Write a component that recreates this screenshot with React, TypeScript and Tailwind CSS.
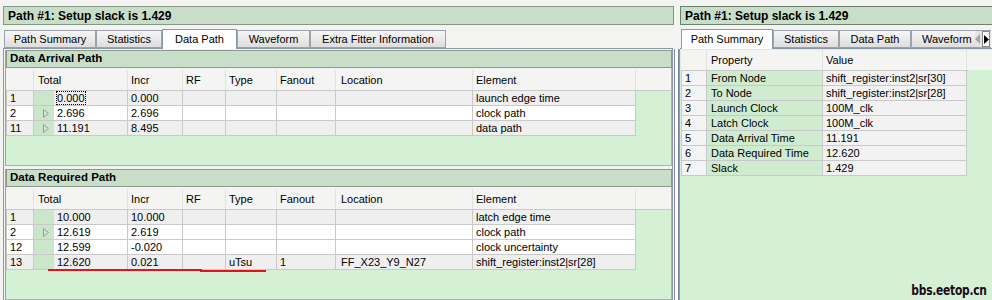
import React from 'react';

type PathRow = {
  n: string;
  arrow?: boolean;
  total: string;
  incr: string;
  type?: string;
  fanout?: string;
  loc?: string;
  el: string;
  shade?: boolean;
  focus?: boolean;
};

const arrival: PathRow[] = [
  { n: '1', total: '0.000', incr: '0.000', el: 'launch edge time', shade: true, focus: true },
  { n: '2', arrow: true, total: '2.696', incr: '2.696', el: 'clock path' },
  { n: '11', arrow: true, total: '11.191', incr: '8.495', el: 'data path', shade: true },
];

const required: PathRow[] = [
  { n: '1', total: '10.000', incr: '10.000', el: 'latch edge time', shade: true },
  { n: '2', arrow: true, total: '12.619', incr: '2.619', el: 'clock path' },
  { n: '12', total: '12.599', incr: '-0.020', el: 'clock uncertainty' },
  { n: '13', total: '12.620', incr: '0.021', type: 'uTsu', fanout: '1', loc: 'FF_X23_Y9_N27', el: 'shift_register:inst2|sr[28]', shade: true },
];

const summary = [
  ['From Node', 'shift_register:inst2|sr[30]'],
  ['To Node', 'shift_register:inst2|sr[28]'],
  ['Launch Clock', '100M_clk'],
  ['Latch Clock', '100M_clk'],
  ['Data Arrival Time', '11.191'],
  ['Data Required Time', '12.620'],
  ['Slack', '1.429'],
];

const COLS = 'grid grid-cols-[28px_20px_74px_55px_43px_51px_59px_137px_163px]';
const CELL = 'border-r border-b border-[#c9c9c9] pl-[3px] leading-[14px] whitespace-nowrap overflow-hidden';

function Arrow() {
  return (
    <svg width="6" height="9" viewBox="0 0 6 9" className="ml-[9px] mt-[3px]">
      <path d="M0.5 0.5 L5.5 4.5 L0.5 8.5 Z" fill="none" stroke="#9a9a9a" strokeWidth="1" />
    </svg>
  );
}

function Tab({ label, w, active }: { label: string; w: string; active?: boolean }) {
  return (
    <div
      className={
        active
          ? `${w} h-[20px] -mb-px border border-b-0 border-[#8d9aa5] bg-white flex items-center justify-center relative z-10`
          : `${w} h-[18px] border border-[#9aa3ab] bg-gradient-to-b from-[#f6f6f6] to-[#dedede] flex items-center justify-center`
      }
    >
      {label}
    </div>
  );
}

function SectionHeader({ title }: { title: string }) {
  return (
    <div className="h-[18px] border border-[#8b9b8b] bg-[#c9dec9] pl-[3px] flex items-center font-bold text-[11.5px]">
      {title}
    </div>
  );
}

function PathTable({ title, rows, grow }: { title: string; rows: PathRow[]; grow?: boolean }) {
  return (
    <div className={`flex flex-col border-l border-[#a0a0a0] ${grow ? 'flex-1' : 'h-[116px]'}`}>
      <SectionHeader title={title} />
      <div className="flex-1 bg-[#d5f1d5] border-r border-b border-[#a8b8a8] flex flex-col">
        <div className="h-[2px] bg-[#f4f4f4]" />
        <div className={`${COLS} h-[20px] bg-[#f4f4f2] w-full`}>
          <div className="border-r border-[#e2e2e2]" />
          <div className="col-span-2 border-r border-[#e2e2e2] pl-[4px] leading-[20px]">Total</div>
          <div className="border-r border-[#e2e2e2] pl-[3px] leading-[20px]">Incr</div>
          <div className="border-r border-[#e2e2e2] pl-[3px] leading-[20px]">RF</div>
          <div className="border-r border-[#e2e2e2] pl-[3px] leading-[20px]">Type</div>
          <div className="border-r border-[#e2e2e2] pl-[3px] leading-[20px]">Fanout</div>
          <div className="border-r border-[#e2e2e2] pl-[5px] leading-[20px]">Location</div>
          <div className="border-r border-[#e2e2e2] pl-[3px] leading-[20px]">Element</div>
        </div>
        <div className="border-t border-[#c9c9c9]">
          {rows.map((r) => (
            <div key={r.n} className={`${COLS} h-[15px] ${r.shade ? 'bg-[#efefef]' : 'bg-white'} w-[630px]`}>
              <div className={`${CELL} border-l pl-[3px]`}>{r.n}</div>
              <div className="border-b border-[#c9c9c9] bg-[#cbe6cb]">{r.arrow && <Arrow />}</div>
              <div className={CELL}>
                {r.focus ? <span className="outline outline-1 outline-dotted outline-black">{r.total}</span> : r.total}
              </div>
              <div className={CELL}>{r.incr}</div>
              <div className={CELL} />
              <div className={CELL}>{r.type}</div>
              <div className={CELL}>{r.fanout}</div>
              <div className={`${CELL} pl-[5px]`}>{r.loc}</div>
              <div className={CELL}>{r.el}</div>
            </div>
          ))}
        </div>
      </div>
    </div>
  );
}

export default function App() {
  return (
    <div className="relative w-[992px] h-[300px] overflow-hidden bg-[#f3f3f1] text-[11px] text-black font-['Liberation_Sans',Arial,sans-serif] flex">
      {/* left panel */}
      <div className="w-[674px] pl-[3px] pt-[6px] flex flex-col">
        <div className="h-[19px] border border-[#879787] bg-[#c8dec8] pl-[4px] flex items-center font-bold text-[12px]">
          Path #1: Setup slack is 1.429
        </div>
        <div className="flex items-end pl-[1px] mt-[2px] h-[21px]">
          <Tab label="Path Summary" w="w-[92px]" />
          <Tab label="Statistics" w="w-[66px]" />
          <Tab label="Data Path" w="w-[75px]" active />
          <Tab label="Waveform" w="w-[73px]" />
          <Tab label="Extra Fitter Information" w="w-[136px]" />
        </div>
        <div className="flex-1 w-[670px] border-t border-l border-r border-[#8d9aa5] pl-[1px] pt-[1px] flex flex-col gap-[3px]">
          <PathTable title="Data Arrival Path" rows={arrival} />
          <PathTable title="Data Required Path" rows={required} grow />
        </div>
      </div>

      {/* right panel */}
      <div className="flex-1 pt-[6px] pl-[6px] flex flex-col">
        <div className="h-[19px] border border-[#6f7f6f] border-r-0 bg-[#c8dec8] pl-[4px] flex items-center font-bold text-[12px]">
          Path #1: Setup slack is 1.429
        </div>
        <div className="flex items-end pl-[1px] mt-[2px] h-[21px]">
          <Tab label="Path Summary" w="w-[92px]" active />
          <Tab label="Statistics" w="w-[66px]" />
          <Tab label="Data Path" w="w-[72px]" />
          <div className="w-[64px] h-[18px] border border-r-0 border-[#9aa3ab] bg-gradient-to-b from-[#f6f6f6] to-[#dedede] pl-[10px] leading-[16px] overflow-hidden whitespace-nowrap">
            Waveform
          </div>
          <div className="h-[18px] flex items-center gap-[1px] bg-[#e4e4e4] border-y border-[#9aa3ab] pr-[1px]">
            <svg width="6" height="10" viewBox="0 0 6 10"><path d="M5 0 L0 5 L5 10 Z" fill="#a8a8a8" /></svg>
            <div className="w-[8px] h-[16px] bg-white border border-[#8a8a8a] flex items-center justify-center">
              <svg width="5" height="9" viewBox="0 0 5 9"><path d="M0 0 L5 4.5 L0 9 Z" fill="#000" /></svg>
            </div>
          </div>
        </div>
        <div className="flex-1 flex border-t border-[#8d9aa5]">
          <div className="w-[5px] border-l border-r border-[#8383a3] bg-white -ml-[6px]" />
          <div className="flex-1 bg-[#d5f1d5] border-l border-[#8d9aa5] pl-[1px] pt-[1px]">
            <div className="grid grid-cols-[26px_116px_144px_1fr] h-[20px] bg-[#f4f4f2]">
              <div className="border-r border-[#e2e2e2]" />
              <div className="border-r border-[#e2e2e2] pl-[4px] leading-[20px]">Property</div>
              <div className="border-r border-[#e2e2e2] pl-[3px] leading-[20px]">Value</div>
              <div />
            </div>
            <div className="w-[287px] border-t border-[#c9c9c9]">
              {summary.map(([p, v], i) => (
                <div key={p} className="grid grid-cols-[26px_116px_144px] h-[15px]">
                  <div className="border-l border-r border-b border-[#c9c9c9] bg-[#f4f4f4] pl-[3px] leading-[14px]">{i + 1}</div>
                  <div className="border-r border-b border-[#c9c9c9] bg-[#d0ecd0] pl-[4px] leading-[14px] whitespace-nowrap">{p}</div>
                  <div className="border-r border-b border-[#c9c9c9] bg-[#f2f2f2] pl-[3px] leading-[14px] whitespace-nowrap">{v}</div>
                </div>
              ))}
            </div>
          </div>
        </div>
      </div>

      {/* red annotation underline */}
      <div className="absolute left-[48px] top-[269px] w-[154px] h-[2px] bg-[#e4121c]" />
      <div className="absolute left-[200px] top-[270px] w-[66px] h-[2px] bg-[#e4121c]" />

      {/* watermark */}
      <div className="absolute right-[5px] bottom-[3px] font-['DejaVu_Sans_Condensed','Liberation_Sans',sans-serif] font-bold text-[14px] leading-[14px] tracking-[-0.3px] text-[#1c0c1c] scale-x-[0.85] origin-right">
        bbs.eetop.cn
      </div>
    </div>
  );
}
